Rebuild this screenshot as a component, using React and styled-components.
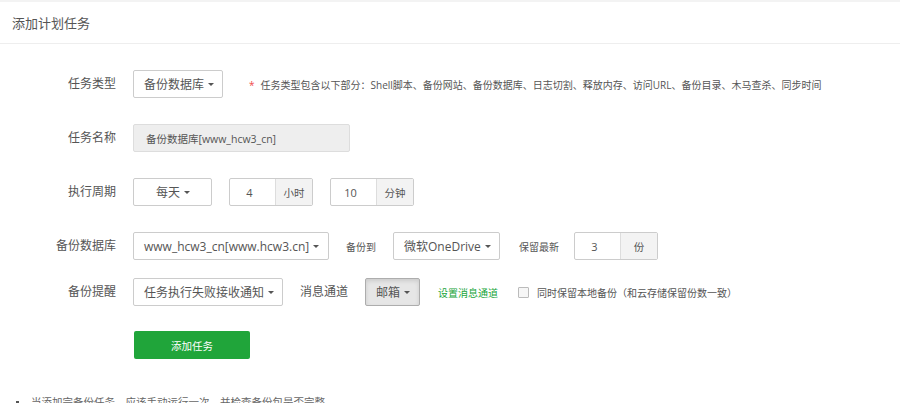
import React from "react";
import styled, { createGlobalStyle } from "styled-components";

const GlobalStyle = createGlobalStyle`
  body {
    margin: 0;
    background: #fff;
    color: #555;
    font-family: "Open Sans", "Noto Sans CJK SC", sans-serif;
  }
`;

const Header = styled.div`
  height: 41px;
  border-top: 2px solid #f3f3f3;
  border-bottom: 1px solid #eeeeee;
  display: flex;
  align-items: center;
  padding-left: 12px;
  font-size: 13px;
  color: #555;
`;

const Form = styled.div`
  padding-top: 26px;
`;

const Row = styled.div`
  display: flex;
  align-items: center;
  height: 28px;
  gap: 17px;
  margin-bottom: ${props => props.$mb || 26}px;
`;

const Label = styled.span`
  width: ${props => (props.$auto ? "auto" : "116px")};
  flex-shrink: 0;
  text-align: right;
  font-size: 12px;
  color: #555;
  line-height: 28px;
`;

const Select = styled.div`
  box-sizing: border-box;
  height: 28px;
  width: ${props => props.$width}px;
  display: inline-flex;
  align-items: center;
  justify-content: ${props => (props.$center ? "center" : "flex-start")};
  padding: 0 9px 0 10px;
  border: 1px solid ${props => (props.$active ? "#adadad" : "#cccccc")};
  border-radius: 2px;
  background: ${props => (props.$active ? "#e6e6e6" : "#fff")};
  box-shadow: ${props =>
    props.$active ? "inset 0 2px 4px rgba(0,0,0,0.12)" : "none"};
  font-size: ${props => props.$size || 12}px;
  color: #555;
  white-space: nowrap;
  overflow: hidden;
  flex-shrink: 0;
`;

const Caret = styled.span`
  display: inline-block;
  flex-shrink: 0;
  margin-left: 4px;
  width: 0;
  height: 0;
  border-left: 3px solid transparent;
  border-right: 3px solid transparent;
  border-top: 3px solid #555;
`;

const Hint = styled.span`
  font-size: 10px;
  color: #555;
  margin-left: ${props => props.$ml || 0}px;
  white-space: nowrap;
`;

const Star = styled.span`
  color: #ef4a4a;
  margin-right: 6px;
`;

const TextInput = styled.div`
  box-sizing: border-box;
  height: 28px;
  width: 217px;
  display: flex;
  align-items: center;
  padding-left: 12px;
  background: #eeeeee;
  border: 1px solid #dddddd;
  border-radius: 2px;
  font-size: 10.5px;
  color: #555;
`;

const InputGroup = styled.div`
  display: flex;
  height: 28px;
  box-sizing: border-box;
  border: 1px solid #cccccc;
  border-radius: 2px;
  flex-shrink: 0;
  margin-left: ${props => props.$ml || 0}px;
`;

const GroupInput = styled.span`
  width: 45px;
  display: flex;
  align-items: center;
  justify-content: center;
  padding-right: 6px;
  box-sizing: border-box;
  font-size: 11px;
  color: #555;
`;

const Addon = styled.span`
  width: 36px;
  display: flex;
  align-items: center;
  justify-content: center;
  background: #f3f3f3;
  border-left: 1px solid #dddddd;
  font-size: 10.5px;
  color: #555;
`;

const GreenLink = styled.a`
  font-size: 10px;
  color: #20a53a;
  text-decoration: none;
  margin-left: 1px;
  white-space: nowrap;
`;

const CheckLabel = styled.label`
  display: flex;
  align-items: center;
  gap: 8px;
  margin-left: 3px;
  font-size: 10px;
  color: #555;
  white-space: nowrap;
`;

const CheckBox = styled.span`
  width: 9px;
  height: 9px;
  border: 1px solid #bbbbbb;
  border-radius: 1px;
  background: #f6f6f6;
`;

const SubmitButton = styled.button`
  margin-left: 134px;
  width: 116px;
  height: 28px;
  border: none;
  border-radius: 2px;
  background: #20a53a;
  color: #fff;
  font-family: "Open Sans", "Noto Sans CJK SC", sans-serif;
  font-size: 10.5px;
  padding: 0;
  display: block;
`;

const Tips = styled.ul`
  list-style: none;
  margin: 35px 0 0;
  padding-left: 16px;
`;

const Tip = styled.li`
  display: flex;
  align-items: center;
  font-size: 10.5px;
  line-height: 16px;
  color: #666;

  &::before {
    content: "";
    width: 3px;
    height: 3px;
    background: #555;
    margin-right: 12px;
  }
`;

const Dropdown = ({ children, ...rest }) => (
  <Select {...rest}>
    {children}
    <Caret />
  </Select>
);

export default function App() {
  return (
    <>
      <GlobalStyle />
      <Header>添加计划任务</Header>
      <Form>
        <Row>
          <Label>任务类型</Label>
          <Dropdown $width={90}>备份数据库</Dropdown>
          <Hint $ml={9}>
            <Star>*</Star>
            任务类型包含以下部分：Shell脚本、备份网站、备份数据库、日志切割、释放内存、访问URL、备份目录、木马查杀、同步时间
          </Hint>
        </Row>
        <Row>
          <Label>任务名称</Label>
          <TextInput>备份数据库[www_hcw3_cn]</TextInput>
        </Row>
        <Row>
          <Label>执行周期</Label>
          <Dropdown $width={79} $center>
            每天
          </Dropdown>
          <InputGroup>
            <GroupInput>4</GroupInput>
            <Addon>小时</Addon>
          </InputGroup>
          <InputGroup>
            <GroupInput>10</GroupInput>
            <Addon>分钟</Addon>
          </InputGroup>
        </Row>
        <Row $mb={18}>
          <Label>备份数据库</Label>
          <Dropdown $width={196}>www_hcw3_cn[www.hcw3.cn]</Dropdown>
          <Hint>备份到</Hint>
          <Dropdown $width={107}>微软OneDrive</Dropdown>
          <Hint $ml={2}>保留最新</Hint>
          <InputGroup $ml={-2}>
            <GroupInput>3</GroupInput>
            <Addon>份</Addon>
          </InputGroup>
        </Row>
        <Row $mb={25}>
          <Label>备份提醒</Label>
          <Dropdown $width={150}>任务执行失败接收通知</Dropdown>
          <Label $auto>消息通道</Label>
          <Dropdown $width={55} $center $active>
            邮箱
          </Dropdown>
          <GreenLink href="#">设置消息通道</GreenLink>
          <CheckLabel>
            <CheckBox />
            同时保留本地备份（和云存储保留份数一致）
          </CheckLabel>
        </Row>
        <SubmitButton>添加任务</SubmitButton>
        <Tips>
          <Tip>当添加完备份任务，应该手动运行一次，并检查备份包是否完整</Tip>
        </Tips>
      </Form>
    </>
  );
}
